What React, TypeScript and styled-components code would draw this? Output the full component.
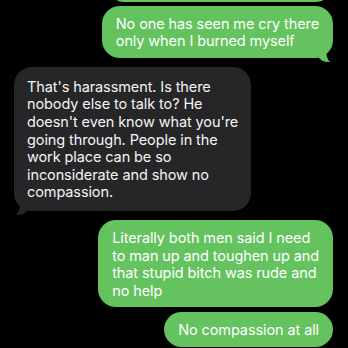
import React from "react";
import styled, { createGlobalStyle } from "styled-components";

const GlobalStyle = createGlobalStyle`
    html, body {
        margin: 0;
        padding: 0;
        background: #000000;
        overflow: hidden;
    }
`;

const Screen = styled.div`
    width: 348px;
    height: 348px;
    overflow: hidden;
    background: #000000;
    font-family: Inter, "Liberation Sans", sans-serif;
`;

const Thread = styled.div`
    display: flex;
    flex-direction: column;
    padding: 0 15px 0 14px;
    margin-top: -33px;
`;

const Row = styled.div<{ $mine: boolean; $gap: number }>`
    display: flex;
    justify-content: ${(p) => (p.$mine ? "flex-end" : "flex-start")};
    margin-top: ${(p) => p.$gap}px;
`;

const Bubble = styled.div<{ $mine: boolean }>`
    position: relative;
    background: ${(p) => (p.$mine ? "#64c35f" : "#262628")};
    color: ${(p) => (p.$mine ? "#ffffff" : "#f4f4f4")};
    border-radius: 18px;
    padding: ${(p) => (p.$mine ? "9px 14px 8px 14px" : "11px 13px 10px 13px")};
    font-size: 14.5px;
    line-height: 17.6px;
    letter-spacing: -0.1px;
    white-space: nowrap;
`;

const Line = styled.div``;

const Tail = styled.svg<{ $mine: boolean }>`
    position: absolute;
    bottom: -6px;
    width: 14px;
    height: 16px;
    ${(p) => (p.$mine ? "right: 3px;" : "left: 2px;")}
`;

type Message = {
    mine: boolean;
    lines: string[];
    gap: number;
    tail?: boolean;
};

const messages: Message[] = [
    { mine: true, lines: ["\u00a0"], gap: 0 },
    {
        mine: true,
        lines: ["No one has seen me cry there", "only when I burned myself"],
        gap: 4,
        tail: true,
    },
    {
        mine: false,
        lines: [
            "That's harassment. Is there",
            "nobody else to talk to? He",
            "doesn't even know what you're",
            "going through. People in the",
            "work place can be so",
            "inconsiderate and show no",
            "compassion.",
        ],
        gap: 9,
        tail: true,
    },
    {
        mine: true,
        lines: [
            "Literally both men said I need",
            "to man up and toughen up and",
            "that stupid bitch was rude and",
            "no help",
        ],
        gap: 9,
    },
    { mine: true, lines: ["No compassion at all"], gap: 5 },
];

function BubbleTail({ mine, color }: { mine: boolean; color: string }) {
    return (
        <Tail $mine={mine} viewBox="0 0 14 16">
            {mine ? (
                <path d="M0 0 L10 0 C10 6 11 11 14 14 C9 14.5 5 12.5 3 10 Z" fill={color} />
            ) : (
                <path d="M14 0 L4 0 C4 6 3 11 0 14 C5 14.5 9 12.5 11 10 Z" fill={color} />
            )}
        </Tail>
    );
}

export default function App() {
    return (
        <Screen>
            <GlobalStyle />
            <Thread>
                {messages.map((m, i) => (
                    <Row key={i} $mine={m.mine} $gap={m.gap}>
                        <Bubble $mine={m.mine} style={i === 0 ? { width: 198 } : undefined}>
                            {m.lines.map((l, j) => (
                                <Line key={j}>{l}</Line>
                            ))}
                            {m.tail && (
                                <BubbleTail mine={m.mine} color={m.mine ? "#64c35f" : "#262628"} />
                            )}
                        </Bubble>
                    </Row>
                ))}
            </Thread>
        </Screen>
    );
}
